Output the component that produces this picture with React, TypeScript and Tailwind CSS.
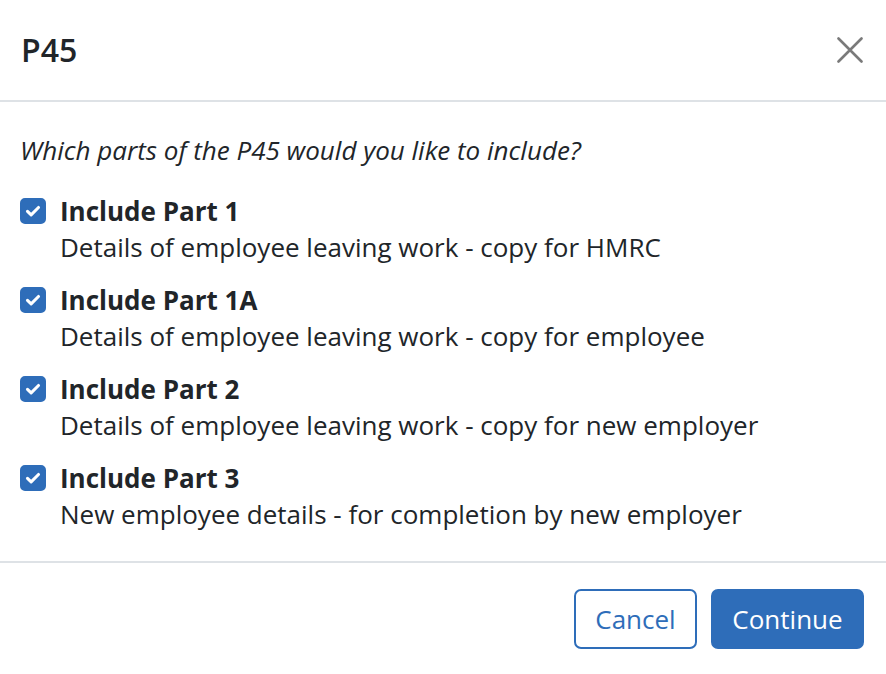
import { useState } from "react";

const PARTS = [
  { id: "1", title: "Include Part 1", text: "Details of employee leaving work - copy for HMRC" },
  { id: "1a", title: "Include Part 1A", text: "Details of employee leaving work - copy for employee" },
  { id: "2", title: "Include Part 2", text: "Details of employee leaving work - copy for new employer" },
  { id: "3", title: "Include Part 3", text: "New employee details - for completion by new employer" },
];

function CheckBox({ checked, onChange }: { checked: boolean; onChange: () => void }) {
  return (
    <button
      type="button"
      onClick={onChange}
      className={
        "mt-[5px] flex h-[26px] w-[26px] shrink-0 items-center justify-center rounded-[5px] border-2 " +
        (checked ? "border-[#2e6db9] bg-[#2e6db9]" : "border-[#adb5bd] bg-white")
      }
    >
      {checked && (
        <svg viewBox="0 0 20 20" className="h-[22px] w-[22px]">
          <path d="M5 10.3l3.3 3.2L15 6.8" fill="none" stroke="white" strokeWidth="2.8" strokeLinecap="round" strokeLinejoin="round" />
        </svg>
      )}
    </button>
  );
}

export default function App() {
  const [checked, setChecked] = useState<Record<string, boolean>>({ "1": true, "1a": true, "2": true, "3": true });

  return (
    <div className="min-h-[674px] bg-white text-[#212529] font-['Open_Sans',sans-serif]">
      <div className="flex h-[102px] items-center justify-between border-b-2 border-[#dee2e6] pl-[21px] pr-[21px]">
        <h1 className="text-[32px] font-semibold leading-[38px]">P45</h1>
        <button type="button" className="flex h-[30px] w-[30px] items-center justify-center text-[#7a7a7a]">
          <svg viewBox="0 0 26 26" className="h-[26px] w-[26px]">
            <path d="M1.5 1.5l23 23M24.5 1.5l-23 23" stroke="currentColor" strokeWidth="2.6" strokeLinecap="round" />
          </svg>
        </button>
      </div>

      <div className="px-5 pb-[29px] pt-[30px] text-[26px] leading-[36px]">
        <p className="mb-[25px] italic">Which parts of the P45 would you like to include?</p>
        <div className="flex flex-col gap-[17px]">
          {PARTS.map((p) => (
            <label key={p.id} className="flex gap-[14px]">
              <CheckBox
                checked={checked[p.id]}
                onChange={() => setChecked((c) => ({ ...c, [p.id]: !c[p.id] }))}
              />
              <div>
                <p className="font-bold leading-[36px]">{p.title}</p>
                <p className="leading-[36px]">{p.text}</p>
              </div>
            </label>
          ))}
        </div>
      </div>

      <div className="flex justify-end gap-[14px] border-t-2 border-[#dee2e6] px-[22px] pb-[25px] pt-[26px] text-[26px]">
        <button type="button" className="h-[60px] w-[123px] rounded-[7px] border-2 border-[#2e6db9] bg-white text-[#2e6db9]">
          Cancel
        </button>
        <button type="button" className="h-[60px] w-[153px] rounded-[7px] border-2 border-[#2e6db9] bg-[#2e6db9] text-white">
          Continue
        </button>
      </div>
    </div>
  );
}
